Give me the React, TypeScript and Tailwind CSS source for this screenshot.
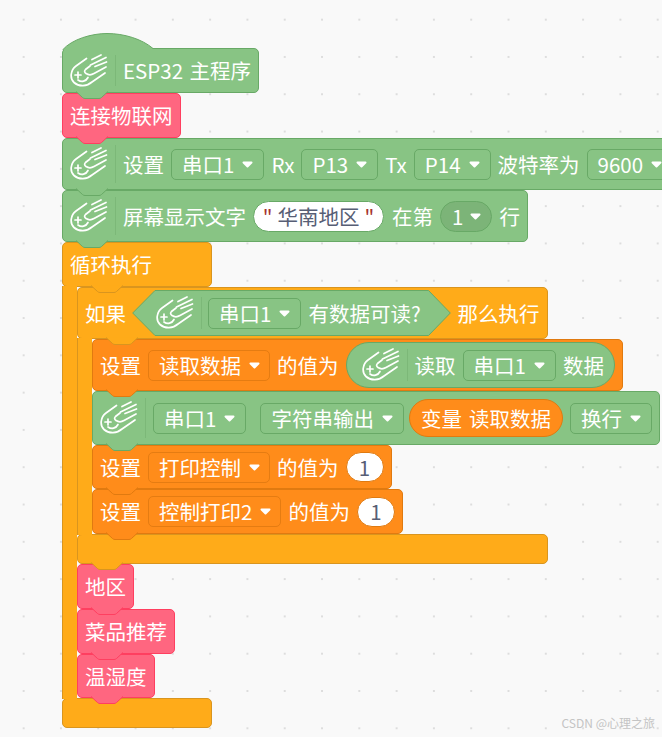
import React from 'react';

type Kind = 'green' | 'pink' | 'yellow' | 'orange';

const KINDS: Record<Kind, { bg: string; border: string; fill: string; stroke: string }> = {
  green: { bg: 'bg-[#88c484]', border: 'border-[#68a966]', fill: 'fill-[#88c484]', stroke: 'stroke-[#68a966]' },
  pink: { bg: 'bg-[#ff6680]', border: 'border-[#ff3f60]', fill: 'fill-[#ff6680]', stroke: 'stroke-[#ff3f60]' },
  yellow: { bg: 'bg-[#ffab19]', border: 'border-[#d9951f]', fill: 'fill-[#ffab19]', stroke: 'stroke-[#d9951f]' },
  orange: { bg: 'bg-[#ff8c1a]', border: 'border-[#e07a10]', fill: 'fill-[#ff8c1a]', stroke: 'stroke-[#e07a10]' },
};

// connector that hangs below a block and covers the top of the next one
function Tab({ kind, left = 'left-[13px]' }: { kind: Kind; left?: string }) {
  const k = KINDS[kind];
  return (
    <svg width="32" height="9" viewBox="0 0 32 9" className={`absolute top-full -mt-px z-10 ${left}`}>
      <path d="M0 0.5 L6.5 6.5 Q7.5 7.5 9 7.5 L23 7.5 Q24.5 7.5 25.5 6.5 L32 0.5" className={`${k.fill} ${k.stroke}`} strokeWidth="1" />
    </svg>
  );
}

function Logo() {
  return (
    <svg width="38" height="34" viewBox="0 0 38 34" fill="none" stroke="white" strokeWidth="1.7" strokeLinecap="round" strokeLinejoin="round" className="shrink-0">
      <path d="M16.5 4.5 L6 12 C0.5 16 -0.5 24.5 4 28.5 C9 33 17 32.5 22 28 L35 19" />
      <path d="M22 5.5 L31 1 M20.5 11 L36 3.5 M25 12.5 L36.5 8" />
      <path d="M20 12 L15.5 15.5 C14 17 14.5 18.5 16 19.5 C19 21.5 21.5 21 24 19.5 L36 13" />
      <path d="M8 18 V24 M5 21 H11" />
      <path d="M8 26 C11.5 28.5 16 27.5 18 23.5" />
    </svg>
  );
}

function LogoCell() {
  return (
    <div className="flex items-center self-stretch shrink-0">
      <Logo />
      <div className="w-px self-stretch my-[6px] ml-[7px] bg-[#7cb878]" />
    </div>
  );
}

function Caret() {
  return (
    <svg width="11" height="7" viewBox="0 0 11 7" className="shrink-0">
      <path d="M1.5 1.5 H9.5 L5.5 5.5 Z" fill="white" stroke="white" strokeWidth="2" strokeLinejoin="round" />
    </svg>
  );
}

function Field({ label, kind = 'green' }: { label: string; kind?: Kind }) {
  const variant = kind === 'orange' ? 'border-[#e57c12] pr-[9px]' : 'border-[#68a966] pr-[10px]';
  return (
    <div className={`h-[31px] flex items-center gap-[8px] pl-[10px] border rounded-[5px] shrink-0 ${variant}`}>
      <span>{label}</span>
      <Caret />
    </div>
  );
}

function NumberPill() {
  return (
    <div className="h-[30px] w-[38px] flex items-center justify-center rounded-full bg-white border border-[#e07a10] text-[#575e75] shrink-0">1</div>
  );
}

function Block({ kind, className = '', tab = true, children }: { kind: Kind; className?: string; tab?: boolean; children: React.ReactNode }) {
  const k = KINDS[kind];
  return (
    <div className={`relative w-max flex items-center gap-[7px] pl-[7px] pr-[7px] border rounded-[5px] text-white ${k.bg} ${k.border} ${className}`}>
      {children}
      {tab && <Tab kind={kind} />}
    </div>
  );
}

function PinkBlock({ label }: { label: string }) {
  return <Block kind="pink" className="h-[45px]">{label}</Block>;
}

function SetBlock({ name, children, className }: { name: string; children: React.ReactNode; className: string }) {
  return (
    <Block kind="orange" className={className}>
      <span>设置</span>
      <Field label={name} kind="orange" />
      <span>的值为</span>
      {children}
    </Block>
  );
}

function BooleanHex({ children }: { children: React.ReactNode }) {
  return (
    <div className="flex h-[46px] w-max text-white">
      <svg width="24" height="46" viewBox="0 0 24 46" className="shrink-0">
        <path d="M24 0.5 L23 0.5 L0.7 23 L23 45.5 L24 45.5 Z" className="fill-[#88c484]" />
        <path d="M24 0.5 L23 0.5 L0.7 23 L23 45.5 L24 45.5" fill="none" className="stroke-[#68a966]" />
      </svg>
      <div className="flex items-center gap-[7px] border-y border-[#68a966] bg-[#88c484] pr-[7px]">{children}</div>
      <svg width="23" height="46" viewBox="0 0 23 46" className="shrink-0">
        <path d="M0 0.5 L0.5 0.5 L22.3 23 L0.5 45.5 L0 45.5 Z" className="fill-[#88c484]" />
        <path d="M0 0.5 L0.5 0.5 L22.3 23 L0.5 45.5 L0 45.5" fill="none" className="stroke-[#68a966]" />
      </svg>
    </div>
  );
}

function Arm() {
  return <div className={`relative z-[1] -my-px w-[15px] shrink-0 border-l ${KINDS.yellow.bg} ${KINDS.yellow.border}`} />;
}

export default function App() {
  const y = KINDS.yellow;
  return (
    <div className="relative w-[662px] h-[737px] overflow-hidden bg-[#f9f9f9] bg-[radial-gradient(circle,#dddddd_1px,transparent_1.5px)] bg-[size:37.3px_37.3px] bg-[position:5px_1px] font-['Noto_Sans_CJK_SC',sans-serif] text-[20.5px] leading-none">
      <div className="pt-[48px] pl-[62px] flex flex-col">
        {/* Main program hat */}
        <Block kind="green" className="h-[45px]">
          <svg width="92" height="17" viewBox="0 0 92 17" className="absolute -left-px -top-[16px]">
            <path d="M0.5 17 C10 6 30 0.5 45 0.5 C62 0.5 80 6 91 15.5 L91 17 Z" className="fill-[#88c484]" />
            <path d="M0.5 17 C10 6 30 0.5 45 0.5 C62 0.5 80 6 91 15.5" fill="none" className="stroke-[#68a966]" />
          </svg>
          <LogoCell />
          <span className="[word-spacing:2px]">ESP32 主程序</span>
        </Block>

        <PinkBlock label="连接物联网" />

        <Block kind="green" className="h-[52px]">
          <LogoCell />
          <span>设置</span>
          <Field label="串口1" />
          <span>Rx</span>
          <Field label="P13" />
          <span>Tx</span>
          <Field label="P14" />
          <span>波特率为</span>
          <Field label="9600" />
        </Block>

        <Block kind="green" className="h-[52px]">
          <LogoCell />
          <span>屏幕显示文字</span>
          <div className="h-[31px] w-[131px] flex items-center justify-center gap-[5px] rounded-full bg-white border border-[#68a966] text-[#575e75] shrink-0">
            <span className="text-[#a5342f]">"</span>
            <span>华南地区</span>
            <span className="text-[#a5342f]">"</span>
          </div>
          <span className="ml-px">在第</span>
          <div className="h-[31px] flex items-center gap-[7px] pl-[11px] pr-[10px] rounded-full bg-[#7cb478] border border-[#68a966] shrink-0">
            <span>1</span>
            <Caret />
          </div>
          <span>行</span>
        </Block>

        {/* Forever loop */}
        <div className="flex flex-col w-max">
          <div className={`relative w-[150px] h-[45px] flex items-center pl-[7px] border rounded-[5px] text-white ${y.bg} ${y.border}`}>
            循环执行
            <Tab kind="yellow" left="left-[28px]" />
          </div>
          <div className="flex">
            <Arm />
            <div className="flex flex-col">
              {/* If block */}
              <div className="flex flex-col w-max">
                <div className={`relative w-[471px] h-[52px] flex items-center gap-[6px] pl-[7px] border rounded-[5px] text-white ${y.bg} ${y.border}`}>
                  <span>如果</span>
                  <BooleanHex>
                    <LogoCell />
                    <div className="-ml-px">
                      <Field label="串口1" />
                    </div>
                    <span>有数据可读?</span>
                  </BooleanHex>
                  <span className="ml-[1px]">那么执行</span>
                  <Tab kind="yellow" left="left-[28px]" />
                </div>
                <div className="flex">
                  <Arm />
                  <div className="flex flex-col">
                    <SetBlock name="读取数据" className="h-[52px]">
                      <div className="h-[46px] flex items-center gap-[7px] pl-[15px] pr-[10px] rounded-full bg-[#88c484] border border-[#68a966] shrink-0">
                        <LogoCell />
                        <span>读取</span>
                        <Field label="串口1" />
                        <span>数据</span>
                      </div>
                    </SetBlock>
                    <Block kind="green" className="h-[54px]">
                      <LogoCell />
                      <Field label="串口1" />
                      <div className="w-0" />
                      <Field label="字符串输出" />
                      <div className="-ml-[2px] h-[38px] flex items-center px-[11px] gap-[7px] rounded-full bg-[#ff8c1a] border border-[#e07a10] shrink-0">
                        <span>变量</span>
                        <span>读取数据</span>
                      </div>
                      <Field label="换行" />
                    </Block>
                    <SetBlock name="打印控制" className="h-[44px]"><NumberPill /></SetBlock>
                    <SetBlock name="控制打印2" className="h-[45px]"><NumberPill /></SetBlock>
                  </div>
                </div>
                <div className={`relative w-[471px] h-[30px] border rounded-[5px] ${y.bg} ${y.border}`}>
                  <Tab kind="yellow" />
                </div>
              </div>
              <PinkBlock label="地区" />
              <PinkBlock label="菜品推荐" />
              <Block kind="pink" className="h-[44px]">温湿度</Block>
            </div>
          </div>
          <div className={`w-[150px] h-[30px] border rounded-[5px] ${y.bg} ${y.border}`} />
        </div>
      </div>
      <div className="absolute right-[7px] bottom-[8px] text-[12px] text-[#c4c4c4]">CSDN @心理之旅</div>
    </div>
  );
}
